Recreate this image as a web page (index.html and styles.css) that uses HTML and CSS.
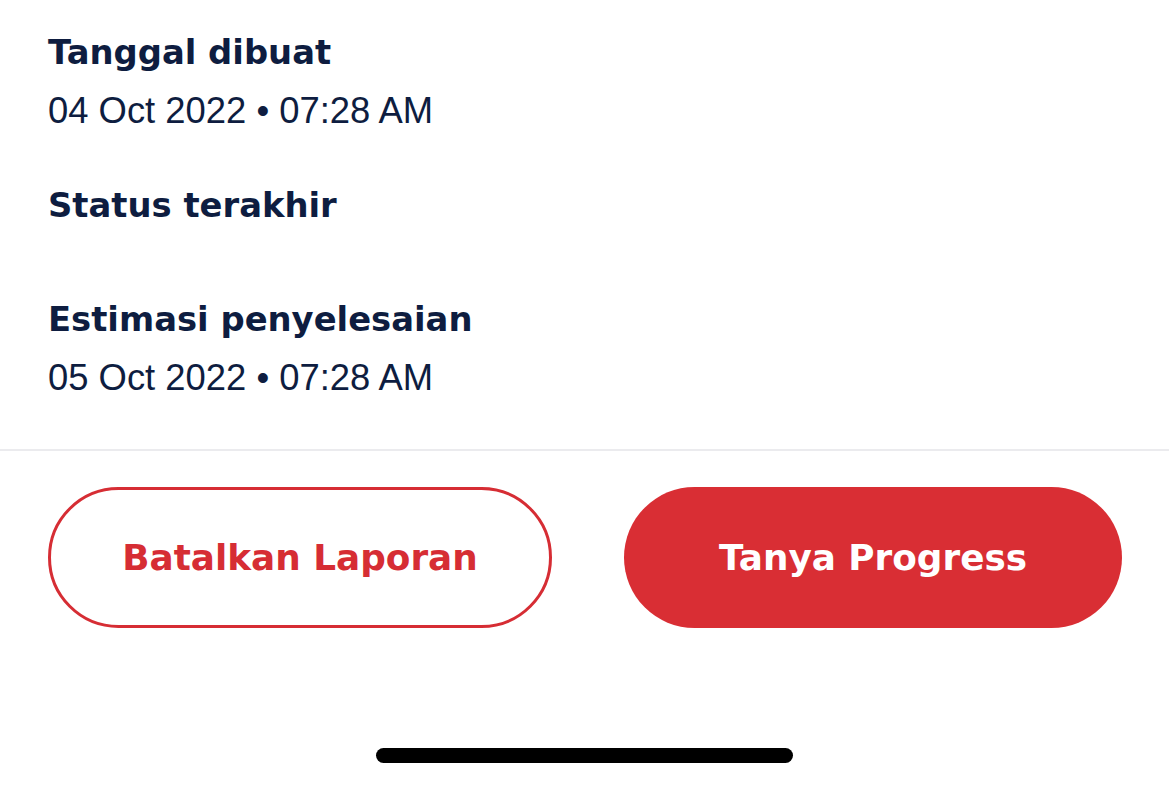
FILE: index.html
```html
<!DOCTYPE html>
<html lang="id">
<head>
  <meta charset="UTF-8" />
  <meta name="viewport" content="width=device-width, initial-scale=1.0"/>
  <title>Detail Laporan</title>
  <link rel="stylesheet" href="styles.css">
</head>
<body>
  <div class="details">
    <div class="field">
      <div class="label">Tanggal dibuat</div>
      <div class="value">04 Oct 2022 • 07:28 AM</div>
    </div>
    <div class="field">
      <div class="label">Status terakhir</div>
      <div class="value empty"></div>
    </div>
    <div class="field">
      <div class="label">Estimasi penyelesaian</div>
      <div class="value">05 Oct 2022 • 07:28 AM</div>
    </div>
  </div>

  <div class="actions">
    <button class="btn btn-outline">Batalkan Laporan</button>
    <button class="btn btn-solid">Tanya Progress</button>
  </div>

  <div class="home-bar"></div>
</body>
</html>
```

FILE: styles.css
```css
body {
  margin: 0;
  padding: 0;
  background-color: #fff;
  color: #0e1d40;
  font-family: "Liberation Sans", Arial, sans-serif;
}
.details {
  padding: 24px 48px 42px;
  border-bottom: 2px solid #ebebee;
}
.field {
  margin-bottom: 37px;
}
.field:last-child {
  margin-bottom: 0;
}
.label {
  font-family: "DejaVu Sans", Inter, sans-serif;
  font-weight: 700;
  font-size: 33.8px;
  line-height: 58px;
}
.value {
  font-size: 36.4px;
  line-height: 58px;
}
.value.empty {
  height: 19px;
}
.actions {
  display: flex;
  gap: 72px;
  padding: 36px 47px 0 48px;
}
.btn {
  flex: 1 1 0;
  height: 141px;
  border-radius: 71px;
  font-family: "DejaVu Sans", Inter, sans-serif;
  font-weight: 700;
  font-size: 35.8px;
  cursor: pointer;
}
.btn-outline {
  background-color: #fff;
  color: #d62d34;
  border: 3px solid #d62d34;
}
.btn-solid {
  background-color: #d92e34;
  color: #fff;
  border: none;
}
.home-bar {
  width: 417px;
  height: 15px;
  margin: 120px auto 0;
  background-color: #000;
  border-radius: 8px;
}
```
